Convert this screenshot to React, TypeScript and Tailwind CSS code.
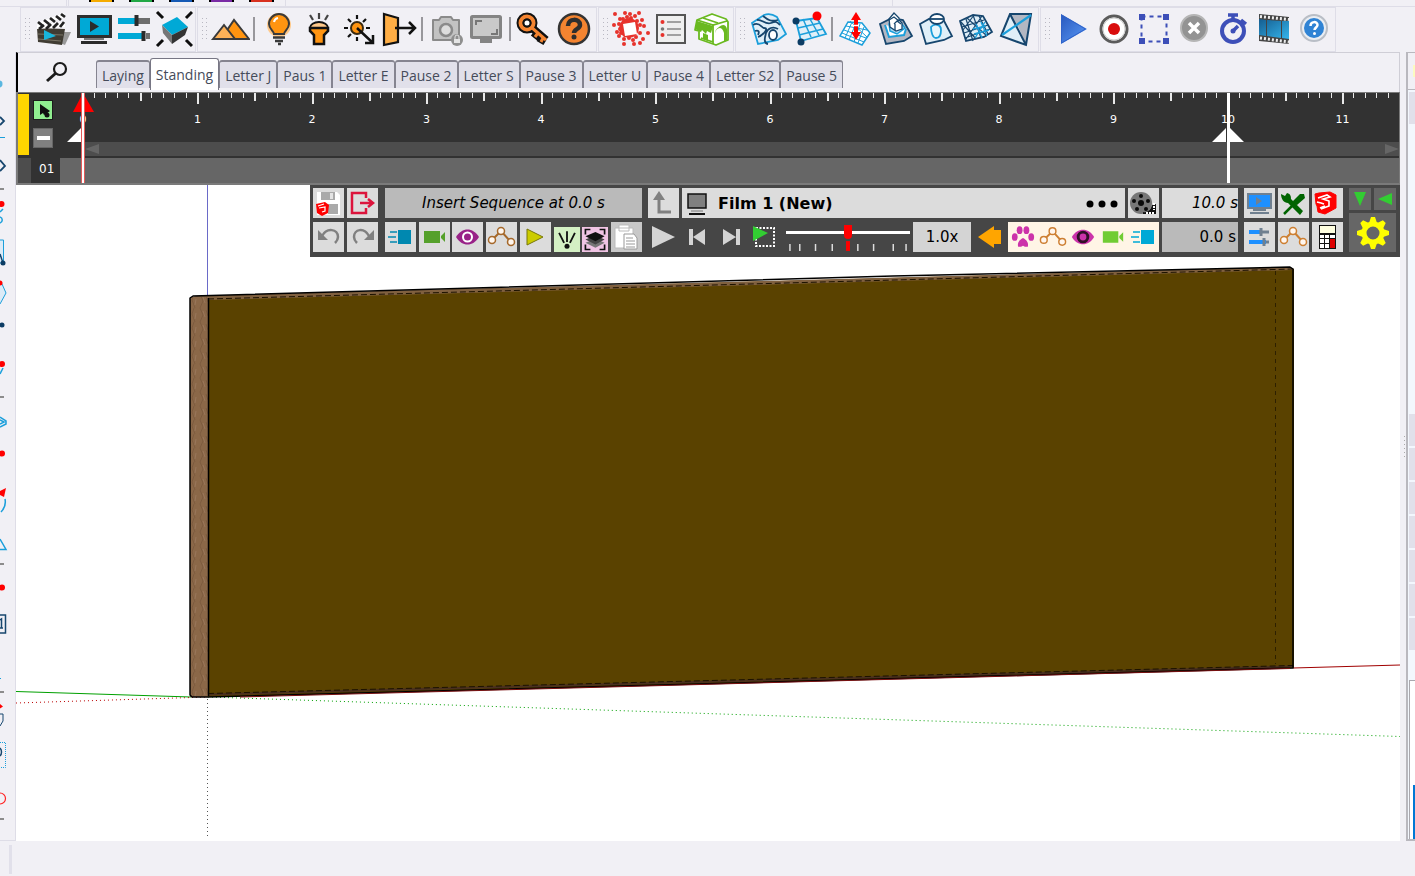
import { useState, type ReactNode } from 'react'
import clsx from 'clsx'

const NAVY = '#17466e'
const SKY = '#1b9fdb'

type Tool = {
  name: string
  icon?: ReactNode
}

const sep: Tool = { name: 'separator' }

// Main toolbar icons are drawn on a 40 x 44 grid

const sceneTools: Tool[] = [
  {
    name: 'Movie',
    icon: (
      <>
        <path d="M29 25l9 0-6 13-5-2z" fill="#9a9a9a" />
        <path d="M4 21l28 1-3 16-24-3z" fill="#403c33" />
        <path d="M4 16L31 6l1 4L5 20z" fill="#fff" />
        <path d="M4 18l28-3v5L4 22z" fill="#fff" />
        <path d="M5 15l5 4M11 13l5 4M17 11l5 4M23 9l5 4M28 7l4 3M6 22l5-4M13 22l5-5M20 21l5-5M27 20l4-5" stroke="#222" strokeWidth="2.8" />
        <path d="M5 27l25 1M5 32l23 2" stroke="#7a7566" strokeWidth="1" />
        <path d="M11 23l12 6-12 4z" fill="#18b5dc" />
      </>
    ),
  },
  {
    name: 'Film preview',
    icon: (
      <>
        <rect x="5.5" y="9.5" width="32" height="20" fill="#00a9d6" stroke="#2e2e2e" strokeWidth="3" />
        <path d="M17 14l9 5.5-9 5.5z" fill="#2b2b2b" />
        <path d="M11 32h20" stroke="#777" strokeWidth="2" />
        <path d="M8 35.5h26" stroke="#2b2b2b" strokeWidth="3" />
      </>
    ),
  },
  {
    name: 'Adjust',
    icon: (
      <>
        <path d="M5 14h17M5 29h24" stroke="#00a9d6" strokeWidth="6" />
        <path d="M25 14h12M33 29h4" stroke="#6d6d6d" strokeWidth="6" />
        <path d="M23.5 8v11M30.5 24v10" stroke="#2b2b2b" strokeWidth="4" />
      </>
    ),
  },
  {
    name: 'Animate object',
    icon: (
      <>
        <path d="M9 18l15-8 11 10-16 8z" fill="#00a9d6" />
        <path d="M9 18l10 10v9l-9-11z" fill="#777" />
        <path d="M19 28l16-8-3 8-13 9z" fill="#333" />
        <path d="M4 5l6 6M39 5l-6 6M4 39l6-6M39 39l-6-6" stroke="#0d0d0d" strokeWidth="3" />
      </>
    ),
  },
]

const lightTools: Tool[] = [
  {
    name: 'Terrain',
    icon: (
      <>
        <path d="M11 32l13-19 15 19z" fill="#ff9410" stroke="#3a3a3a" strokeWidth="2" />
        <path d="M3 32l11-14 11 14z" fill="#ffb257" stroke="#3a3a3a" strokeWidth="2" />
      </>
    ),
  },
  sep,
  {
    name: 'Light',
    icon: (
      <>
        <circle cx="21" cy="18" r="12" fill="#ffc98a" />
        <path d="M16 27c0-3-5-5-5-10a10 10 0 0 1 20 0c0 5-5 7-5 10z" fill="#ff9410" stroke="#3a3a3a" strokeWidth="2" />
        <path d="M16 15a5 5 0 0 1 4-4" fill="none" stroke="#fff" strokeWidth="2" />
        <path d="M15 30.5h12M17 34h8M20 37h3" stroke="#3a3a3a" strokeWidth="2.5" />
      </>
    ),
  },
  {
    name: 'Torch',
    icon: (
      <>
        <path d="M21 6v6M12 8l3 5M30 8l-3 5" stroke="#444" strokeWidth="2.2" />
        <path d="M12 21a9 6 0 0 1 18 0z" fill="#ffc98a" stroke="#111" strokeWidth="2" />
        <path d="M12 21h18v3l-4 4v9H16v-9l-4-4z" fill="#ff9410" stroke="#111" strokeWidth="2.5" />
      </>
    ),
  },
  {
    name: 'Move sun',
    icon: (
      <>
        <circle cx="19" cy="21" r="6" fill="#ff9410" stroke="#3a2a10" strokeWidth="2" />
        <path d="M19 8v4M19 30v4M6 21h4M28 21h4M10 12l3 3M28 12l-3 3M10 30l3-3" stroke="#111" strokeWidth="2.2" />
        <path d="M19 21l16 15M35 28v8h-8" fill="none" stroke="#111" strokeWidth="2.5" />
      </>
    ),
  },
  {
    name: 'Exit',
    icon: (
      <>
        <path d="M6 7l14 4v24L6 38z" fill="#ffae45" stroke="#111" strokeWidth="2.2" />
        <path d="M17 21h20M31 15l6 6-6 6" fill="none" stroke="#111" strokeWidth="2.5" />
      </>
    ),
  },
  sep,
  {
    name: 'Lock camera',
    icon: (
      <>
        <path d="M7 13h6l2-3h10l2 3h6v20H7z" fill="#c2c2c2" stroke="#8a8a8a" strokeWidth="2" strokeLinejoin="round" />
        <circle cx="20" cy="23" r="6" fill="#ddd" stroke="#8a8a8a" strokeWidth="2.5" />
        <circle cx="31" cy="33" r="6" fill="#8f8f8f" />
        <path d="M29 32v-2a2 2 0 0 1 4 0v2" fill="none" stroke="#e4e4e4" />
        <rect x="28" y="32" width="6" height="4" fill="#e4e4e4" />
      </>
    ),
  },
  {
    name: 'Frame size',
    icon: (
      <>
        <rect x="5.5" y="9.5" width="29" height="21" rx="1" fill="#c9c9c9" stroke="#848484" strokeWidth="3" />
        <path d="M10 18v-4h6M31 22v5h-6" fill="none" stroke="#777" strokeWidth="2" />
        <path d="M14 34h12" stroke="#848484" strokeWidth="4" />
      </>
    ),
  },
  sep,
  {
    name: 'License key',
    icon: (
      <>
        <path d="M17 20l15 13M24 26l-4 5M29 31l-3 5" stroke="#111" strokeWidth="8" />
        <circle cx="13" cy="16" r="7" fill="none" stroke="#111" strokeWidth="7" />
        <path d="M17 20l15 13M24 26l-3 4M29 31l-2 4" stroke="#f48430" strokeWidth="3" />
        <circle cx="13" cy="16" r="6.5" fill="none" stroke="#f48430" strokeWidth="4" />
        <circle cx="13" cy="16" r="3.5" fill="#fff" stroke="#111" strokeWidth="2" />
      </>
    ),
  },
  {
    name: 'Help',
    icon: (
      <>
        <circle cx="20" cy="22" r="15" fill="#f48430" stroke="#333" strokeWidth="2.5" />
        <path d="M14 19c0-8 12-8 12-1 0 4-6 4-6 8" fill="none" stroke="#2e2e2e" strokeWidth="4.5" />
        <circle cx="20" cy="30" r="2.5" fill="#2e2e2e" />
      </>
    ),
  },
]

const burst = [
  [19, 7], [14, 6], [4, 7], [28, 6], [9, 12], [24, 9], [31, 13], [3, 18], [8, 17], [12, 12],
  [16, 10], [20, 11], [26, 14], [29, 18], [33, 19], [37, 26], [6, 25], [9, 22], [8, 29], [13, 32],
  [18, 31], [22, 33], [25, 30], [29, 26], [32, 32], [29, 36], [13, 37], [23, 37], [10, 26], [14, 28],
]

const scatterTools: Tool[] = [
  {
    name: 'Scatter',
    icon: (
      <>
        <circle cx="18" cy="21" r="10" fill="#e7332c" />
        {burst.map(([x, y]) => (
          <circle key={`${x}-${y}`} cx={x} cy={y} r="2" fill="#e7332c" />
        ))}
        <path d="M12 17l12-2 2 12-12 2z" fill="#fff" />
      </>
    ),
  },
  {
    name: 'Scatter list',
    icon: (
      <>
        <rect x="6" y="8" width="28" height="28" fill="#efefef" stroke="#555" strokeWidth="2" />
        <path d="M16 15h14M16 22h14M16 28h14" stroke="#888" strokeWidth="1.5" />
        <circle cx="11.5" cy="15" r="2" fill="#e7332c" />
        <circle cx="11.5" cy="22" r="1.8" fill="#777" />
        <circle cx="11.5" cy="28" r="2" fill="#e7332c" />
      </>
    ),
  },
  {
    name: 'Warehouse',
    icon: (
      <>
        <path d="M6 13l15-6 14 5 2 3v18l-5 2-7 3-17-6v-8l-4-1z" fill="#fff" stroke="#6ab920" strokeWidth="1.8" strokeLinejoin="round" />
        <path d="M6 13l16 5 14-4M22 17v20M12 11l15 5M10 31l12 4" fill="none" stroke="#6ab920" strokeWidth="1.8" />
        <path d="M6 14l16 5-2 7-4-2-1 3-4-4-1 2-6-3zM12 26l5 2v6l-5-2zM24 37V26c1-5 7-8 9 0v9l3-2V22c-1-5-5-5-8-2-3 2-4 4-4 6z" fill="#6ab920" />
      </>
    ),
  },
]

const terrainTools: Tool[] = [
  {
    name: 'Contours',
    icon: (
      <>
        <path d="M4 16l12-8c5-2 10 0 13 2l9 17-8 6-20 4z" fill="#e0eff8" stroke={SKY} strokeWidth="1.8" />
        <path d="M5 18c6-4 9 3 11 3 6 0-2 8-6 9M9 13c5-1 8 5 14 3s6-1 9 2M15 9c5 4 8 6 15 4M20 37c-5-1-3-7-2-11 2-5 7-7 12-4" fill="none" stroke={NAVY} strokeWidth="1.8" />
        <path d="M7 24c3-1 5 0 3 4" fill="none" stroke={NAVY} strokeWidth="1.8" />
        <ellipse cx="25" cy="28" rx="4" ry="5" fill="#fff" stroke={NAVY} strokeWidth="1.8" />
      </>
    ),
  },
  {
    name: 'Grid from points',
    icon: (
      <>
        <path d="M8 14l21-3 9 16-25 7z" fill="#e0eff8" stroke={SKY} strokeWidth="1.8" />
        <path d="M15 12l8 18M22 12l9 16M10 21l22-5M11 28l24-6" stroke={SKY} strokeWidth="1.5" />
        <circle cx="8" cy="14" r="3.5" fill="#0c3c64" />
        <circle cx="13" cy="35" r="3.5" fill="#0c3c64" />
        <circle cx="29" cy="9" r="4.5" fill="#f00" />
      </>
    ),
  },
  sep,
  {
    name: 'Smoove',
    icon: (
      <>
        <path d="M12 15l14 1 8 10-8 12-22-9z" fill="#fff" stroke={SKY} strokeWidth="1.5" />
        <path d="M10 19l21 4M8 23l22 8M6 26l22 9M16 15L9 31M20 16l-7 17M24 17l-6 18M28 20l-6 16M14 14l17 16" fill="none" stroke={SKY} />
        <path d="M20 5l5 8h-3v12h3l-5 8-5-8h3V13h-3z" fill="#f00" />
        <path d="M17 18.5h6" stroke="#fff" strokeWidth="1.5" />
      </>
    ),
  },
  {
    name: 'Stamp',
    icon: (
      <>
        <path d="M4 17l12-6 11 2 9 16-8 5-18 3z" fill="#b3b7c2" stroke={NAVY} strokeWidth="1.8" />
        <path d="M9 18l4 12 15-2 2-6" fill="#fff" stroke={SKY} strokeWidth="2" />
        <path d="M13 17l9-5 7 9-8 6-7-3z" fill="#a9daf2" stroke={SKY} strokeWidth="1.5" />
        <path d="M13 12l5-6 5 5v2l3 3v6l-6 2-6-4z" fill="#fff" stroke={NAVY} strokeWidth="1.3" />
        <path d="M13 13l5-3 5 4M18 17l3-3 4 3M19 17v6" fill="none" stroke={NAVY} strokeWidth="1.3" />
      </>
    ),
  },
  {
    name: 'Drape',
    icon: (
      <>
        <path d="M4 17l9-5h14l9 17-8 4-18 4z" fill="#e0eff8" stroke={NAVY} strokeWidth="1.8" />
        <path d="M15 20c3-4 10-3 10 3s-2 8-5 8-5-5-5-11z" fill="#e8f6fc" stroke={SKY} strokeWidth="1.8" />
        <ellipse cx="21" cy="12" rx="7" ry="5" fill="#fff" stroke={NAVY} strokeWidth="1.8" />
        <path d="M15 12h12" stroke={NAVY} strokeWidth="1.8" />
      </>
    ),
  },
  {
    name: 'Add detail',
    icon: (
      <>
        <path d="M4 14l13-6 10 1 9 16-8 5-18 4z" fill="#e0eff8" stroke={NAVY} strokeWidth="1.8" />
        <path d="M6 20l22-7M8 26l24-8M9 31l25-9M10 12l7 22M17 8l8 23M23 9l9 18M5 15l15 17M11 11l20 18M10 32L26 9M7 23L18 8" fill="none" stroke={NAVY} strokeWidth="1.2" />
        <path d="M17 22l13-3M18 27l15-4M20 17l6 14M25 15l6 14M19 31l10-16" stroke={SKY} strokeWidth="1.4" />
      </>
    ),
  },
  {
    name: 'Flip edge',
    icon: (
      <>
        <path d="M14 7h21L5 29z" fill="#e0eff8" />
        <path d="M14 7h21l-5 31-9-14z" fill="#b3b7c2" />
        <path d="M5 29L22 19l8 19z" fill="#e0eff8" />
        <path d="M14 7h21l-5 31-25-9zM14 7l16 31" fill="none" stroke={NAVY} strokeWidth="2" />
        <path d="M35 8L6 28" stroke={SKY} strokeWidth="2.2" />
      </>
    ),
  },
]

const recordTools: Tool[] = [
  {
    name: 'Play',
    icon: (
      <>
        <path d="M8 7l26 15L8 37z" fill="url(#playFill)" />
        <path d="M8.5 8l24 14-24 14z" fill="none" stroke="#2f62c9" />
      </>
    ),
  },
  {
    name: 'Record',
    icon: (
      <>
        <circle cx="21" cy="22" r="13" fill="#fff" stroke="#5b5b5b" strokeWidth="3" />
        <circle cx="21" cy="22" r="11" fill="none" stroke="#ccc" />
        <circle cx="21" cy="22" r="6" fill="#d90d0d" />
      </>
    ),
  },
  {
    name: 'Select region',
    icon: (
      <>
        <rect x="8.5" y="9.5" width="25" height="25" fill="none" stroke="#3d4fb8" strokeWidth="2" strokeDasharray="4 4" />
        <path d="M6 7h6v6H6zM30 7h6v6h-6zM6 31h6v6H6zM30 31h6v6h-6z" fill="#3d4fb8" />
      </>
    ),
  },
  {
    name: 'Cancel',
    icon: (
      <>
        <circle cx="21" cy="21" r="13" fill="#939393" stroke="#b5b5b5" strokeWidth="2" />
        <path d="M16 16l10 10M26 16L16 26" stroke="#fff" strokeWidth="3.5" />
      </>
    ),
  },
  {
    name: 'Timer',
    icon: (
      <>
        <circle cx="20" cy="24" r="11" fill="none" stroke="#3d4fb8" strokeWidth="4" />
        <path d="M15 8h10M20 8v6M28 13l5 4M20 24l5-5" stroke="#3d4fb8" strokeWidth="3.5" />
        <circle cx="20" cy="24" r="2.5" fill="#3d4fb8" />
      </>
    ),
  },
  {
    name: 'Frames',
    icon: (
      <>
        <path d="M6 7l30 3v27L6 34z" fill="#444" />
        <path d="M6 12l7 1v16l-7-1zM14 13l14 1v17l-14-2zM29 14h7v18l-7-1z" fill="url(#filmFill)" />
        <path d="M7 9.5l29 3M7 31l29 4" stroke="#eee" strokeWidth="3" strokeDasharray="2 2" />
      </>
    ),
  },
  {
    name: 'About',
    icon: (
      <>
        <circle cx="21" cy="21" r="13" fill="#e9edf2" stroke="#b9bec6" strokeWidth="2" />
        <circle cx="21" cy="21" r="10" fill="#2f83d4" />
        <path d="M17.5 19c0-5 7-5 7-1 0 2-3 3-3 5" fill="none" stroke="#fff" strokeWidth="2.5" />
        <circle cx="21.5" cy="26.5" r="1.5" fill="#fff" />
      </>
    ),
  },
]

const toolGroups = [sceneTools, lightTools, scatterTools, terrainTools, recordTools]

const scenes = [
  'Laying', 'Standing', 'Letter J', 'Paus 1', 'Letter E', 'Pause 2',
  'Letter S', 'Pause 3', 'Letter U', 'Pause 4', 'Letter S2', 'Pause 5',
]

const Grip = () => (
  <svg width="6" height="22" className="shrink-0">
    <path d="M0.5 0v22M4.5 0v22" stroke="#b9b8c2" strokeWidth="1" strokeDasharray="1 3" />
  </svg>
)

const ToolGroup = ({ tools }: { tools: Tool[] }) => (
  <div className="flex h-[45px] shrink-0 items-center border-x border-y border-[#dedde7] pb-[2px] pl-1 pr-[2px]">
    <Grip />
    <div className="ml-[2px] flex items-center">
      {tools.map((tool, i) =>
        tool.icon ? (
          <button key={tool.name} aria-label={tool.name} className="h-11 w-10 shrink-0">
            <svg viewBox="0 0 40 44" className="h-11 w-10">{tool.icon}</svg>
          </button>
        ) : (
          <span key={i} className="mx-[3px] h-6 w-[2px] bg-[#98979c]" />
        )
      )}
    </div>
  </div>
)

const TopStrip = () => (
  <div className="flex h-[7px] items-start border-b border-[#dedde7]">
    <div className="h-[6px] w-[67px] border-r border-[#dedde7]" />
    <div className="h-[6px] w-[2px] border-r border-[#dedde7]" />
    <div className="flex h-[6px] w-[217px] gap-[15px] border-r border-[#dedde7] pl-5">
      <span className="h-[2px] w-[25px] border-x-2 border-black bg-[#f5ab00]" />
      <span className="h-[2px] w-[25px] border-x-2 border-black bg-[#22a846]" />
      <span className="h-[2px] w-[25px] border-x-2 border-black bg-[#1559b5]" />
      <span className="h-[2px] w-[25px] border-x-2 border-black bg-[#7a2aa5]" />
      <span className="h-[2px] w-[25px] border-x-2 border-black bg-[#d8301f]" />
    </div>
    <div className="h-[6px] w-[607px] border-r border-[#dedde7]" />
  </div>
)

const SideTools = () => (
  <aside className="w-4 shrink-0 overflow-hidden border-b border-r border-[#dedde7]">
    <svg viewBox="0 52 16 788" width="16" height="788" fill="none">
      <circle cx="-1" cy="84" r="3.5" fill="#5bb7e0" />
      <path d="M0 117l4 4-4 4M0 160l5 6-5 5" stroke={NAVY} strokeWidth="1.8" />
      <path d="M0 137.5h5" stroke={SKY} />
      <path d="M0 189h4M0 397h4M0 564h4M0 692h4M0 819h4" stroke="#8c8c8c" strokeWidth="2" />
      <path d="M3 209l-3 3M0 217c3 1 3 5 0 6" stroke={SKY} strokeWidth="1.5" />
      <path d="M0 240h3.5v23H0" fill="#dcebf7" stroke={SKY} />
      <path d="M0 254l3 9" stroke={NAVY} strokeWidth="1.5" />
      <circle cx="3" cy="263" r="2.5" fill="#0c3c64" />
      <path d="M0 281l2 3 4 9-6 11" fill="#dcebf7" stroke={SKY} />
      <circle cx="0" cy="283" r="2.5" fill="#f00" />
      <circle cx="2" cy="325" r="2.5" fill="#0c3c64" />
      <path d="M3 368l-3 6" stroke={SKY} strokeWidth="1.5" />
      <path d="M0 417l6 4v3l-6 3M0 420l4 2-4 2" stroke={SKY} strokeWidth="1.5" />
      <circle cx="1.5" cy="204" r="3" fill="#f00" />
      <circle cx="2" cy="364" r="3" fill="#f00" />
      <circle cx="2" cy="453.5" r="3" fill="#f00" />
      <circle cx="2" cy="587.5" r="3" fill="#f00" />
      <path d="M0 491l6-3-2 9-4-2z" fill="#f00" />
      <path d="M5 499c1 5-1 10-4 13" stroke={SKY} strokeWidth="1.5" />
      <path d="M0 539l6 10.5H0" stroke={SKY} strokeWidth="1.5" />
      <path d="M0 615h5.5v18H0M0 620l1.500-1v9M0 628h3" stroke={NAVY} strokeWidth="1.5" />
      <path d="M0 678.5h1" stroke={SKY} />
      <path d="M0 704l3 2.5-3 2z" fill="#f00" />
      <path d="M0 714h3v7l-3 5" stroke={NAVY} />
      <path d="M0 742.5h5.5v25H0" stroke={SKY} strokeDasharray="1 1" />
      <path d="M0 748c2 2 2 6 0 8" stroke={NAVY} strokeWidth="1.5" />
      <circle cx="0" cy="798.5" r="5.5" stroke="#f22" strokeWidth="1.2" />
    </svg>
  </aside>
)

const SceneTabs = () => {
  const [active, setActive] = useState('Standing')

  return (
    <div className="flex h-10 items-start border-l-2 border-t border-l-black border-t-[#cfced6] border-r border-r-[#cfced6]">
      <button aria-label="Search scenes" className="ml-7 mt-2 h-6 w-6 shrink-0">
        <svg viewBox="0 0 24 24" className="h-6 w-6" fill="none" stroke="#1b1b1b">
          <circle cx="14" cy="8" r="6" strokeWidth="2.2" />
          <path d="M10 12l-9 8" strokeWidth="3" />
        </svg>
      </button>
      <div role="tablist" className="ml-[26px] flex items-start pt-[5px]">
        {scenes.map((scene) => (
          <button
            key={scene}
            role="tab"
            aria-selected={scene === active}
            onClick={() => setActive(scene)}
            className={clsx(
              'whitespace-nowrap rounded-t-[3px] border-x border-t px-[5px] text-sm leading-5 text-[#454b5a]',
              scene === active
                ? 'h-8 border-[#777684] bg-white'
                : 'mt-[2px] h-7 border-[#858490] border-t-2 bg-[#e1e0ea] pt-px'
            )}
          >
            {scene}
          </button>
        ))}
      </div>
    </div>
  )
}

const ZERO = 24
const SECOND = 114.5

const Ruler = () => {
  const ticks = Array.from({ length: 115 }, (_, i) => i)

  return (
    <svg className="absolute inset-0 h-full w-full" fontSize="11">
      {ticks.map((i) => (
        <rect
          key={i}
          x={Math.floor(ZERO - 1 + (i * SECOND) / 10)}
          y="0"
          width={i % 5 === 0 ? 2 : 1}
          height={i % 10 === 0 ? 11 : i % 5 === 0 ? 8 : 5}
          fill="#e8e8e8"
        />
      ))}
      {ticks.filter((i) => i % 10 === 0).map((i) => (
        <text key={i} x={ZERO + (i * SECOND) / 10 - 1} y="30" textAnchor="middle" fill="#fff">
          {i / 10}
        </text>
      ))}
      <path d="M7 49l14-14v14zM1152 49l14-14v14zM1170 35l14 14h-14z" fill="#fff" />
      <path d="M13 19L23 0l11 19z" fill="#f00" />
      <rect x="21" y="0" width="4" height="91" fill="#e25a5a" />
      <rect x="22" y="0" width="2" height="91" fill="#fff" />
      <rect x="1167" y="0" width="3" height="91" fill="#fff" />
    </svg>
  )
}

const Timeline = () => (
  <section className="flex h-[93px] border-b-2 border-l-2 border-t border-[#7a7a7a] bg-[#323232] font-['DejaVu_Sans'] text-white">
    <div className="flex w-[42px] shrink-0 flex-col">
      <div className="flex h-[65px]">
        <div className="mb-[3px] mt-px w-[11px] bg-[#ffd500]" />
        <div className="ml-[4px] flex flex-col gap-2 pt-[7px]">
          <button aria-label="Select" className="h-5 w-5 border border-[#1c1c1c] bg-[#90ee90]">
            <svg viewBox="0 0 18 18" className="h-[18px] w-[18px]">
              <path d="M6 3v11l3-2 1 2 2-1 4-3z" fill="#111" />
              <circle cx="13" cy="14" r="2.5" fill="#111" />
              <path d="M10 10l3 4" stroke="#111" strokeWidth="2" />
            </svg>
          </button>
          <button aria-label="Collapse" className="flex h-5 w-5 items-center justify-center border border-[#666] bg-[#808080]">
            <span className="h-1 w-[13px] bg-white" />
          </button>
        </div>
      </div>
      <div className="flex h-[25px]">
        <div className="w-[13px] bg-[#4d4d4d]" />
        <span className="ml-2 pt-[3px] text-xs leading-4">01</span>
      </div>
    </div>
    <div className="relative flex h-[90px] min-w-0 flex-1 flex-col overflow-hidden border-r border-[#7a7a7a]">
      <div className="h-[49px]" />
      <div className="ml-6 flex h-[14px] items-center justify-between bg-[#4d4d4d]">
        <svg width="16" height="10"><path d="M15 0v10L1 5z" fill="#666" /></svg>
        <svg width="16" height="10"><path d="M2 0v10l14-5z" fill="#666" /></svg>
      </div>
      <div className="mt-[2px] h-[25px] bg-[#666]" />
      <Ruler />
    </div>
  </section>
)

// Film toolbar icons are drawn on a 31 x 30 grid

const Nodes = ({ color = '#b87333' }: { color?: string }) => (
  <g fill="#fff6ee" stroke={color} strokeWidth="1.5">
    <path d="M6 18l9-9 10 11" fill="none" strokeWidth="2" />
    <circle cx="6" cy="18" r="3.5" />
    <circle cx="15" cy="9" r="3.5" />
    <circle cx="25" cy="20" r="3.5" />
  </g>
)

const Eye = () => (
  <>
    <path d="M4 15c6-10 17-10 23 0-6 10-17 10-23 0z" fill="#992288" />
    <circle cx="15.5" cy="15" r="4.5" fill="#992288" stroke="#fff" strokeWidth="2" />
  </>
)

const Mover = ({ color = '#0088b0' }: { color?: string }) => (
  <>
    <rect x="13" y="8" width="13" height="14" fill={color} />
    <path d="M5 10h7M3 15h8M5 20h7" stroke={color} strokeWidth="1.5" />
  </>
)

const VideoCam = ({ color = '#55a02b' }: { color?: string }) => (
  <path d="M5 9h16v12H5zM22 14l4-4v10l-4-4z" fill={color} />
)

const Logo = () => (
  <>
    <path d="M3 6l4-1 11-1 6 3v13l-11 6-7-2-1-6-1-2z" fill="#f00" stroke="#f00" strokeLinejoin="round" />
    <path d="M6 10l9-3 3 2-7 2 6 2v5l-8 3M5 14l4 1 3 1M8 20l5-2" fill="none" stroke="#fff" strokeWidth="1.6" />
  </>
)

type CellProps = {
  label: string
  children: ReactNode
  className?: string
}

const Cell = ({ label, children, className = 'h-[30px] w-[31px] bg-[#dcdcdc]' }: CellProps) => (
  <button aria-label={label} className={clsx('shrink-0 overflow-hidden', className)}>
    <svg viewBox="0 0 31 30" className="h-full w-full">{children}</svg>
  </button>
)

const FileCells = () => (
  <div className="grid shrink-0 grid-cols-2 content-start gap-x-[3px] gap-y-1 pr-px">
    <Cell label="Save">
      <path d="M4 4h20l3 3v20H4z" fill="#fff" />
      <path d="M8 4h14v8H8zM15 16h10v10H15z" fill="#aaa" />
      <path d="M17 5h3v6h-3z" fill="#e4e4e4" />
      <path d="M3 16l9-2 4 3-1 8-6 3-5-3z" fill="#f00" />
      <path d="M5 18l6-2M6 20l6-1v4l-3 1" fill="none" stroke="#fff" strokeWidth="1.2" />
    </Cell>
    <Cell label="Export">
      <path d="M19 10V5H5v20h14v-5M13 15h12M21 11l5 4-5 4" fill="none" stroke="#dc143c" strokeWidth="2.5" />
    </Cell>
    <Cell label="Undo">
      <path d="M9 14c5-9 16-7 16 1 0 2-1 4-3 6" fill="none" stroke="#808080" strokeWidth="2.5" />
      <path d="M5 8v10h10z" fill="#808080" />
    </Cell>
    <Cell label="Redo">
      <path d="M22 14c-5-9-15-7-15 1 0 2 1 4 3 6" fill="none" stroke="#808080" strokeWidth="2.5" />
      <path d="M27 8v10H17z" fill="#808080" />
    </Cell>
  </div>
)

const SequenceCells = () => (
  <div className="flex w-[257px] shrink-0 flex-col gap-1">
    <button className="h-[30px] w-full bg-[#bababa] pt-px text-[15px] italic">Insert Sequence at 0.0 s</button>
    <div className="flex items-end justify-between">
      <Cell label="Move"><Mover /></Cell>
      <Cell label="Camera"><VideoCam /></Cell>
      <Cell label="Visibility"><Eye /></Cell>
      <Cell label="Path"><Nodes color="#a5682a" /></Cell>
      <Cell label="Sequence"><path d="M7 7l16 8-16 8z" fill="#cccc00" stroke="#77770a" /></Cell>
      <Cell label="Effects" className="h-[25px] w-[26px] bg-[#d4f0c4]">
        <path d="M6 7l6 12M15.5 5v13M25 7l-6 12" stroke="#111" strokeWidth="2.2" />
        <circle cx="15.5" cy="23" r="3" fill="#111" />
      </Cell>
      <Cell label="Layers" className="h-[25px] w-[26px] bg-[#f0c4e4]">
        <path d="M4 9V3h6M21 3h6v6M27 21v6h-6M10 27H4v-6" fill="none" stroke="#111" strokeWidth="2" />
        <path d="M4 19l12-5 11 5-11 6z" fill="#777" />
        <path d="M4 15l12-5 11 5-11 6z" fill="#444" />
        <path d="M4 11l12-5 11 5-11 6z" fill="#111" />
      </Cell>
      <Cell label="Paste" className="h-[30px] w-[31px] bg-[#c8c8c8]">
        <path d="M4 6h18v20H4zM8 3h10v6H8z" fill="#fff" stroke="#bbb" />
        <path d="M13 12h10l3 4v11H13z" fill="#fff" stroke="#999" />
        <path d="M15 16h7M15 19h9M15 22h9M15 25h9" stroke="#999" />
      </Cell>
    </div>
  </div>
)

const BARE = 'h-[30px] w-[31px]'

const SpeedSlider = () => {
  const [speed, setSpeed] = useState(50)

  return (
    <div className="flex h-[30px] min-w-0 flex-1 flex-col pl-[2px] pt-[2px]">
      <input
        type="range"
        aria-label="Playback speed"
        value={speed}
        onChange={(e) => setSpeed(Number(e.target.value))}
        className="h-4 w-full appearance-none bg-transparent [&::-webkit-slider-runnable-track]:h-[3px] [&::-webkit-slider-runnable-track]:bg-white [&::-webkit-slider-thumb]:-mt-[6px] [&::-webkit-slider-thumb]:h-[14px] [&::-webkit-slider-thumb]:w-2 [&::-webkit-slider-thumb]:appearance-none [&::-webkit-slider-thumb]:rounded-b [&::-webkit-slider-thumb]:bg-[#f00]"
      />
      <svg viewBox="0 0 126 10" className="mt-px h-[10px] w-full">
        <path d="M4 3v7M14 3v7M30 3v7M47 3v7M73 3v7M89 3v7M109 3v7M122 3v7" stroke="#ddd" strokeWidth="1.5" />
        <rect x="61" y="0" width="4" height="10" fill="#f00" />
      </svg>
    </div>
  )
}

const FilmControls = () => (
  <div className="flex min-w-0 flex-1 flex-col gap-1">
    <div className="flex gap-[3px]">
      <Cell label="Parent film">
        <path d="M5 12l6-9 6 9z" fill="#808080" />
        <path d="M11 10v14h12" fill="none" stroke="#808080" strokeWidth="3" />
      </Cell>
      <button className="flex h-[30px] min-w-0 flex-1 items-center bg-[#dcdcdc] pl-[5px] pr-[6px] pt-px text-base font-bold">
        <svg width="22" height="24" viewBox="0 0 22 24">
          <rect x="1" y="2" width="18" height="14" fill="#808080" stroke="#111" strokeWidth="1.5" />
          <path d="M4 19h12" stroke="#777" />
          <path d="M2 22h16" stroke="#111" strokeWidth="2" />
        </svg>
        <span className="ml-[9px]">Film 1 (New)</span>
        <svg width="34" height="8" className="ml-auto">
          <circle cx="5" cy="4" r="3.5" />
          <circle cx="17" cy="4" r="3.5" />
          <circle cx="29" cy="4" r="3.5" />
        </svg>
      </button>
      <Cell label="Reel">
        <circle cx="13" cy="15" r="11" fill="#777" />
        <path d="M15 24c4 1 8-2 9-7l4-1v10H15z" fill="#111" />
        <g fill="#0b0b0b">
          <circle cx="13" cy="15" r="3" />
          <circle cx="13" cy="8" r="2" />
          <circle cx="6" cy="13" r="2" />
          <circle cx="20" cy="13" r="2" />
          <circle cx="9" cy="21" r="2" />
          <circle cx="18" cy="21" r="2" />
        </g>
        <path d="M18 25h9M26 15v7" stroke="#fff" strokeWidth="2" strokeDasharray="2 1" />
      </Cell>
      <button className="h-[30px] w-[76px] shrink-0 bg-[#dcdcdc] pt-px text-right text-[15px] italic">10.0 s</button>
    </div>
    <div className="flex gap-[3px]">
      <Cell label="Play film" className={BARE}><path d="M4 4l23 11L4 26z" fill="#d4d4d4" /></Cell>
      <Cell label="Previous" className={BARE}>
        <path d="M7 7h4v16H7zM23 7v16l-12-8z" fill="#d4d4d4" />
      </Cell>
      <Cell label="Next" className={BARE}>
        <path d="M20 7h4v16h-4zM7 7v16l13-8z" fill="#d4d4d4" />
      </Cell>
      <Cell label="Play selection" className={BARE}>
        <rect x="6" y="6" width="18" height="18" fill="none" stroke="#fff" strokeWidth="2" strokeDasharray="2 1.5" />
        <path d="M3 4l15 7-15 8z" fill="#32cd32" />
      </Cell>
      <SpeedSlider />
      <button className="h-[30px] w-[58px] shrink-0 bg-[#d4d4d4] text-[15px]">1.0x</button>
      <Cell label="Back" className={BARE}>
        <path d="M4 15L20 4v4h7v14h-7v4z" fill="#ffa500" />
      </Cell>
      <div className="flex shrink-0 bg-[#fff5e6]">
        <Cell label="Paw" className="h-[30px] w-[30px]">
          <g fill="#cc33aa">
            <ellipse cx="7" cy="15" rx="3" ry="4" />
            <ellipse cx="12" cy="8" rx="3" ry="4" />
            <ellipse cx="19" cy="8" rx="3" ry="4" />
            <ellipse cx="24" cy="15" rx="3" ry="4" />
            <path d="M15.5 16c4 2 6 5 5 9h-3l-2-1-2 1h-3c-1-4 1-7 5-9z" />
          </g>
        </Cell>
        <Cell label="Paths" className="h-[30px] w-[30px]"><Nodes color="#cd7f32" /></Cell>
        <Cell label="Hidden" className="h-[30px] w-[30px]">
          <path d="M4 15c6-10 17-10 23 0-6 10-17 10-23 0z" fill="#cc33aa" />
          <circle cx="15.5" cy="15" r="5" fill="#cc33aa" stroke="#311028" strokeWidth="3" />
        </Cell>
        <Cell label="Cameras" className="h-[30px] w-[30px]"><VideoCam color="#70cc33" /></Cell>
        <Cell label="Moves" className="h-[30px] w-[31px]"><Mover color="#00a9d6" /></Cell>
      </div>
      <button className="h-[30px] w-[76px] shrink-0 bg-[#bababa] pr-[2px] text-right text-[15px]">0.0 s</button>
    </div>
  </div>
)

const OptionCells = () => (
  <div className="grid shrink-0 grid-cols-3 content-start gap-x-[3px] gap-y-1">
    <Cell label="Preview">
      <rect x="4" y="6" width="23" height="14" fill="#1e90ff" stroke="#708090" strokeWidth="2" />
      <path d="M12 9l6 4-6 4z" fill="#708090" />
      <path d="M9 22h13M6 25h19" stroke="#708090" strokeWidth="2" />
    </Cell>
    <Cell label="Tools">
      <path d="M6 26L20 12" stroke="#006400" strokeWidth="2.5" />
      <path d="M15 13l7-7h4l1 4-8 7zM3 6l4 2 2-3c4 1 4 4 4 6l12 12-3 4-12-12c-4 0-7-4-7-9z" fill="#006400" />
    </Cell>
    <Cell label="Model"><Logo /></Cell>
    <Cell label="Sliders">
      <path d="M5 10h12M5 20h17" stroke="#1e90ff" strokeWidth="4" />
      <path d="M17 10h8M22 20h3" stroke="#708090" strokeWidth="3" />
      <path d="M17 6v8M20 16v8" stroke="#708090" strokeWidth="3" />
    </Cell>
    <Cell label="Path options"><Nodes color="#cd7f32" /></Cell>
    <Cell label="Calculator">
      <rect x="7" y="3" width="17" height="24" fill="#111" />
      <path d="M8 4h15v7H8z" fill="#ffffe0" />
      <path d="M8 13h4v3H8zM13 13h4v3h-4zM18 13h5v3h-5zM8 17h4v4H8zM13 17h4v4h-4zM8 22h4v4H8zM13 22h4v4h-4z" fill="#fff" />
      <path d="M18 17h5v9h-5z" fill="#d00" />
    </Cell>
  </div>
)

const Gear = () => (
  <svg viewBox="-17 -17 34 34" className="h-[34px] w-[34px]">
    {[0, 45, 90, 135].map((angle) => (
      <path key={angle} d="M-2 -16h4l2 6h-8zM-2 16h4l2-6h-8z" fill="#ff0" transform={`rotate(${angle})`} />
    ))}
    <circle r="9" fill="none" stroke="#ff0" strokeWidth="5" />
  </svg>
)

const FilmToolbar = () => (
  <div className="relative flex h-[72px] w-[1090px] shrink-0 gap-[6px] bg-[#464646] pl-[3px] pr-1 pt-[3px] font-['DejaVu_Sans'] text-black">
    <FileCells />
    <SequenceCells />
    <FilmControls />
    <OptionCells />
    <div className="grid w-[47px] shrink-0 grid-cols-2 grid-rows-[22px_39px] gap-[3px]">
      <button aria-label="Collapse down" className="flex items-center justify-center bg-[#666]">
        <svg width="12" height="14"><path d="M0 0h12L6 14z" fill="#32cd32" /></svg>
      </button>
      <button aria-label="Collapse left" className="flex items-center justify-center bg-[#666]">
        <svg width="14" height="12"><path d="M14 0v12L0 6z" fill="#32cd32" /></svg>
      </button>
      <button aria-label="Settings" className="col-span-2 flex items-center justify-center bg-[#666]">
        <Gear />
      </button>
    </div>
  </div>
)

const Model = () => (
  <svg viewBox="16 185 1384 655" className="absolute left-0 top-0 w-full" fill="none">
    <defs>
      <pattern id="wood" width="18" height="14" patternUnits="userSpaceOnUse">
        <rect width="18" height="14" fill="#8b6848" />
        <path d="M2 0l3 7-3 7M8 2l2 6M14 0l-2 6 3 8" stroke="#7d5b3e" />
        <path d="M5 3l2 6M16 5l-1 6" stroke="#99765a" />
      </pattern>
    </defs>
    <path d="M207.5 185v112" stroke="#6a6ac8" />
    <path d="M207.5 699v140" stroke="#555" strokeDasharray="1 3" />
    <path d="M16 691.5l175 5.5" stroke="#00a000" />
    <path d="M16 703l192-6" stroke="#b00" strokeDasharray="1 3" />
    <path d="M208 697l1192 39.5" stroke="#00a000" strokeDasharray="1 3" />
    <path d="M1293 668l107-3" stroke="#a00000" />
    <path d="M190 297l1100-30 4 2v399L208 697h-18z" fill="#5a4200" />
    <path d="M192 296l1098-29 3 3-1085 30z" fill="#80603f" />
    <path d="M190 297h18v400h-18z" fill="url(#wood)" />
    <path d="M208 299l1084-30" stroke="#1c1200" strokeDasharray="6 3" />
    <path d="M208 694.5l1085-28" stroke="#4a3020" strokeWidth="2" />
    <path d="M208 693.5l1085-28" stroke="#1c1200" strokeDasharray="6 3" />
    <path d="M1275.5 271v393" stroke="#2d2000" strokeDasharray="4 4" />
    <path d="M208.5 298v398" stroke="#000" strokeWidth="1.5" />
    <path d="M190 298l3-2 700-20 397-9 3 2v399L208 697h-16l-2-2z" stroke="#000" strokeWidth="1.5" strokeLinejoin="round" />
    <path d="M240 697l1050-28.5" stroke="#7a1010" strokeWidth="1" />
  </svg>
)

const SidePanel = () => (
  <aside className="flex w-[9px] shrink-0 flex-col border-b-2 border-l-2 border-t border-[#b9b8be] bg-[#f3f7fd]">
    <div className="flex h-[37px] items-center justify-end border-b border-[#b9b8be] bg-[#f1f0f5]">
      <span className="h-3 w-[2px] bg-[#fbfbc0]" />
    </div>
    <div className="ml-px mt-[2px] h-8 bg-[#e1e0ea]" />
    <div className="ml-px mt-[290px] flex flex-col gap-[2px]">
      {Array.from({ length: 7 }, (_, i) => (
        <div key={i} className="h-8 bg-[#e1e0ea]" />
      ))}
    </div>
    <div className="ml-px mt-[30px] flex flex-1 items-end justify-end border-l border-t border-[#a9a8ae] bg-white">
      <div className="h-[54px] w-[2px] bg-[#0078d4]" />
    </div>
  </aside>
)

const App = () => (
  <div className="flex min-h-screen flex-col overflow-hidden bg-[#f1f0f5] font-['Open_Sans',sans-serif]">
    <svg className="absolute h-0 w-0">
      <defs>
        <linearGradient id="playFill" x1="0" y1="0" x2="1" y2="1">
          <stop offset="0" stopColor="#2858bd" />
          <stop offset="1" stopColor="#5b9bf8" />
        </linearGradient>
        <linearGradient id="filmFill" x1="0" y1="0" x2="1" y2="1">
          <stop offset="0" stopColor="#155d90" />
          <stop offset="1" stopColor="#35b5ec" />
        </linearGradient>
      </defs>
    </svg>
    <TopStrip />
    <header className="flex h-[45px] gap-px overflow-hidden pl-5">
      {toolGroups.map((tools) => (
        <ToolGroup key={tools[0].name} tools={tools} />
      ))}
    </header>
    <div className="flex flex-1">
      <SideTools />
      <main className="flex min-w-0 flex-1 flex-col">
        <SceneTabs />
        <Timeline />
        <div className="relative flex flex-1 justify-end overflow-hidden bg-white">
          <Model />
          <FilmToolbar />
        </div>
      </main>
      <div className="flex w-[6px] shrink-0 items-center justify-end pr-px">
        <svg width="1" height="22">
          <path d="M0.5 0v22" stroke="#aaa" strokeDasharray="1 3" />
        </svg>
      </div>
      <SidePanel />
    </div>
    <footer className="flex h-9 items-center pl-[9px]">
      <span className="h-[29px] w-[3px] bg-[#e1e0ea]" />
    </footer>
  </div>
)

export default App
